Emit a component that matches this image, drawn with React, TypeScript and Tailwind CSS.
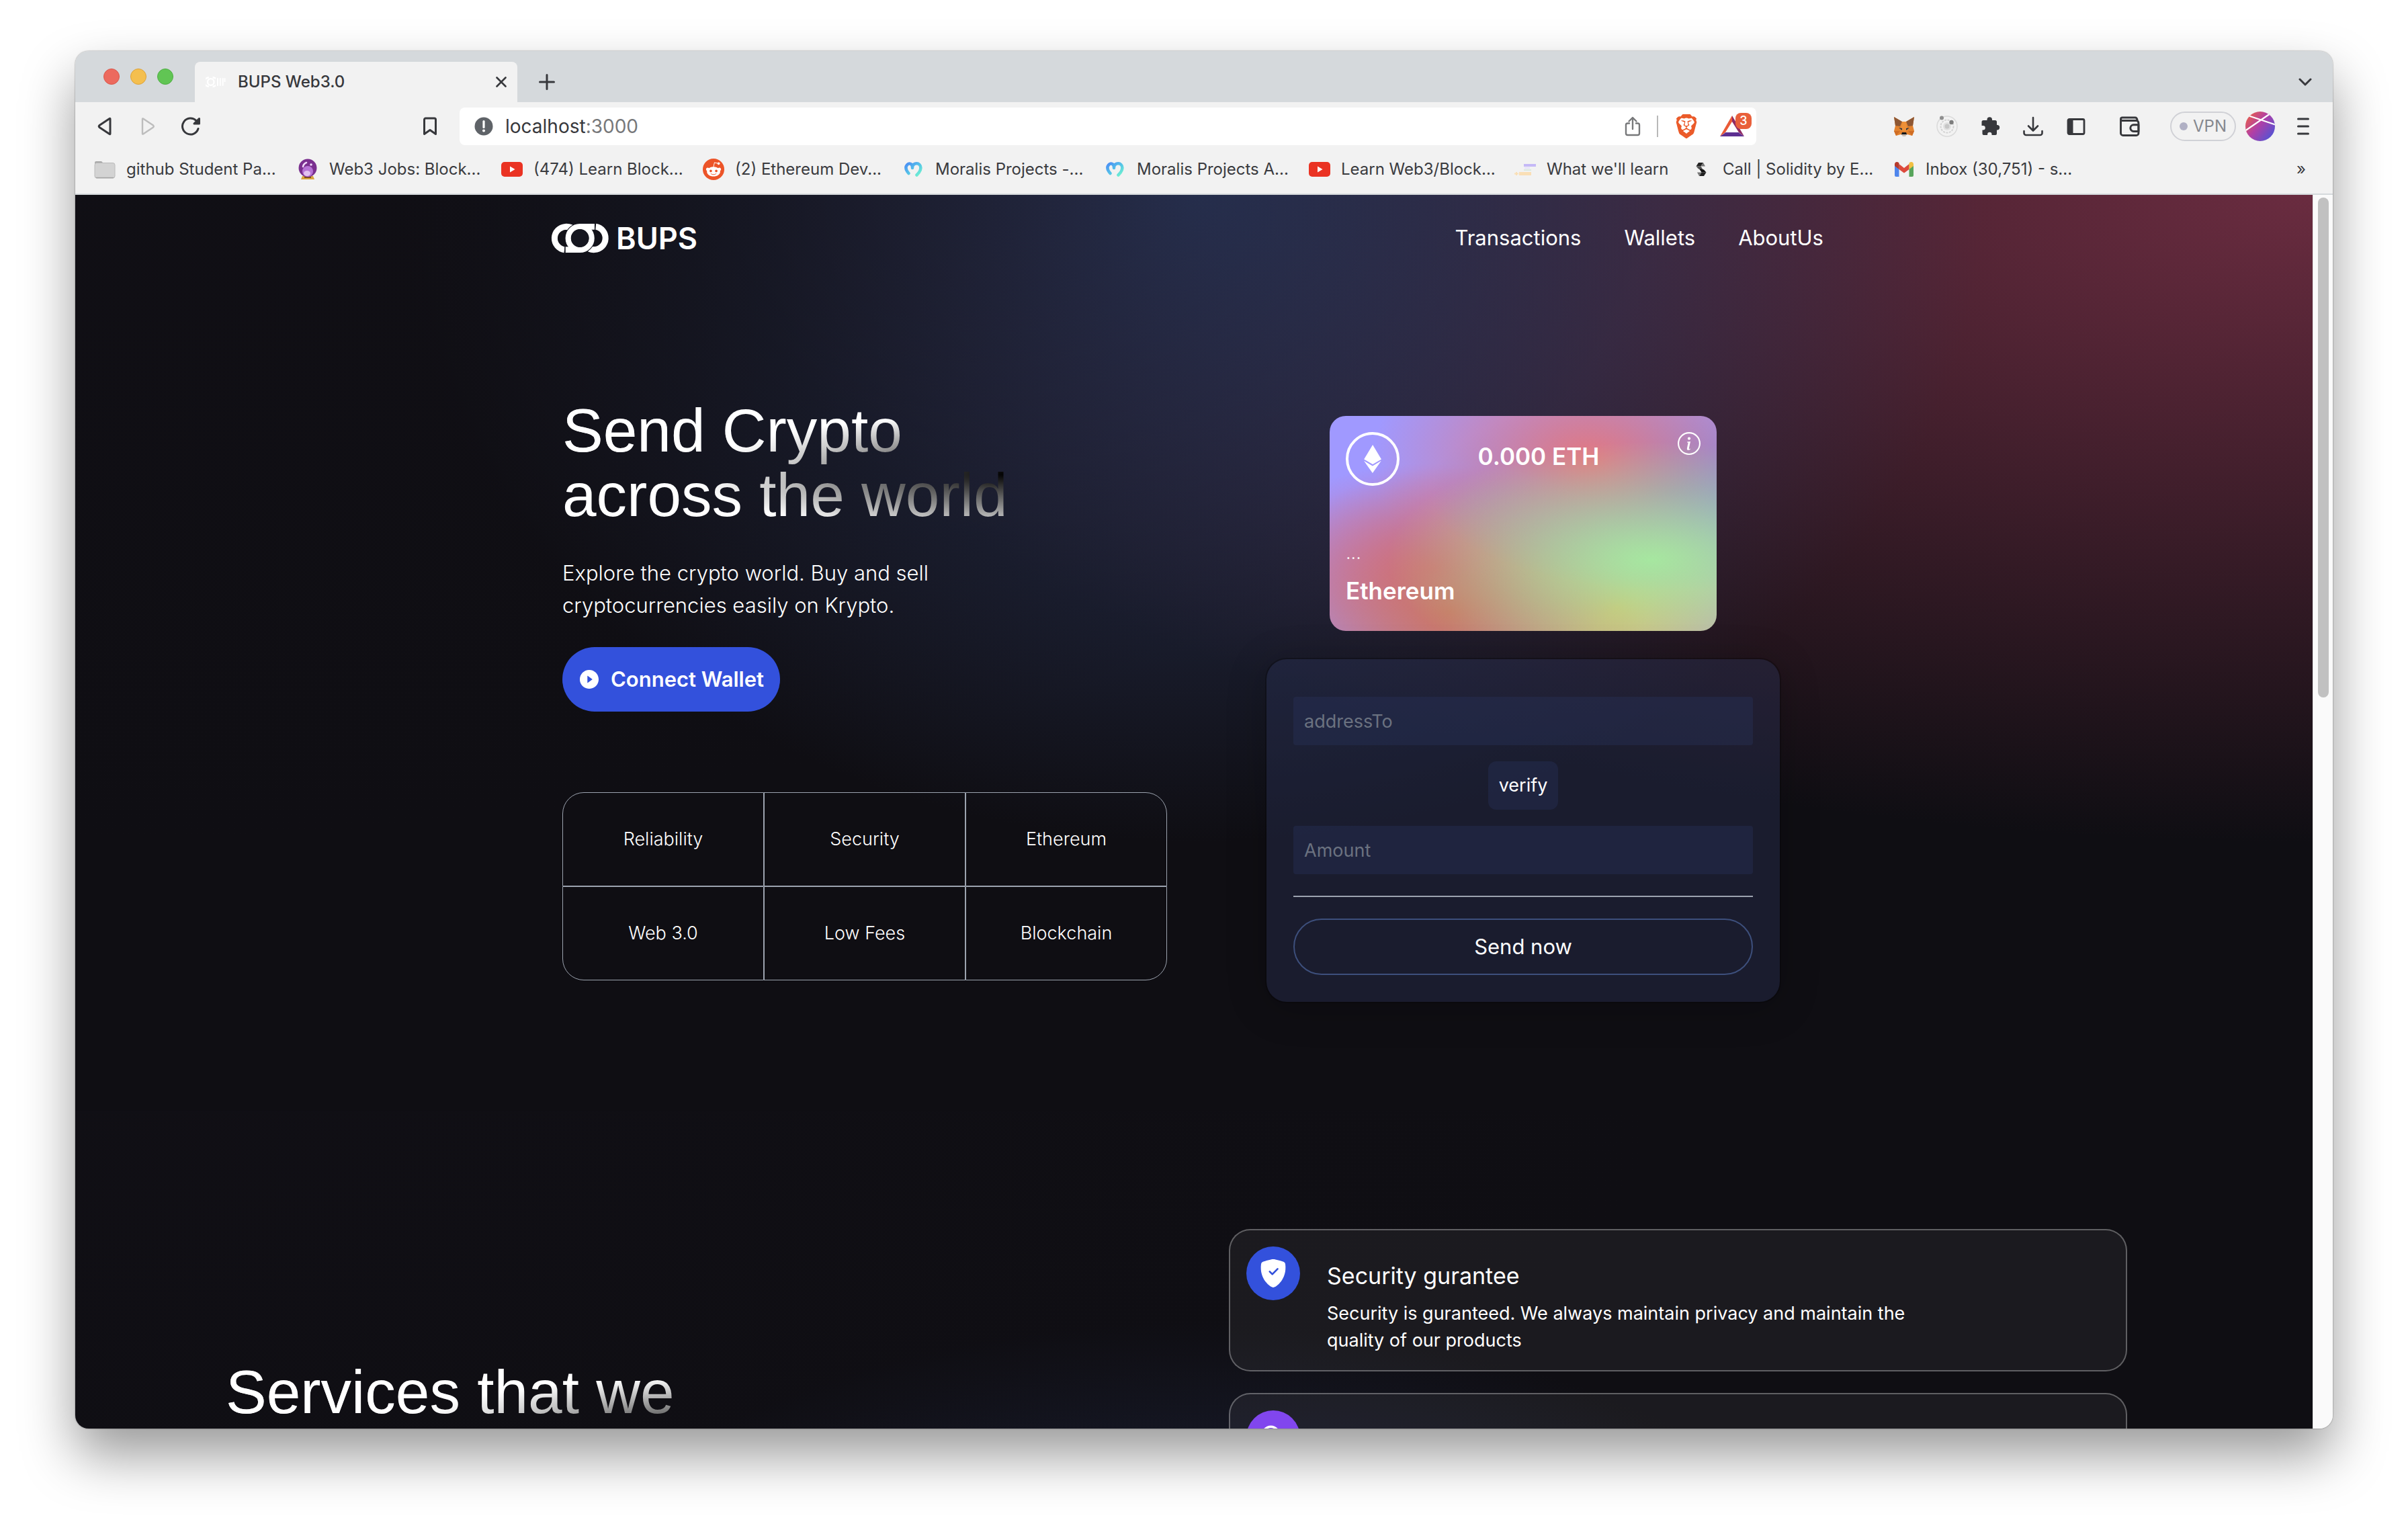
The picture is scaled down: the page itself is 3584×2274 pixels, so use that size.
import type { ReactNode } from "react";
import { SiBrave, SiEthereum } from "react-icons/si";
import { BsInfoCircle, BsShieldFillCheck } from "react-icons/bs";
import { AiFillPlayCircle } from "react-icons/ai";
import { BiSearchAlt } from "react-icons/bi";
import { FaRedditAlien } from "react-icons/fa";

const stroke = {
  fill: "none",
  stroke: "currentColor",
  strokeWidth: 3,
  strokeLinecap: "round" as const,
  strokeLinejoin: "round" as const,
};

function BupsMark({ className }: { className: string }) {
  return (
    <svg viewBox="30 40 260 134" className={className} aria-hidden="true">
      <path d="M90 158.300A51.500 51.500 0 0 1 94 56Q108 55 122 60" fill="none" stroke="currentColor" strokeWidth="27" />
      <path d="M229 55.700A51.500 51.500 0 0 1 224 158Q212 159 200 154" fill="none" stroke="currentColor" strokeWidth="27" />
      <g fill="#15161f" stroke="#15161f" strokeWidth="7">
        <circle cx="159" cy="107" r="64" />
        <path d="M159 43H225V70H200zM159 171H94V144H118z" />
      </g>
      <circle cx="159" cy="107" r="52" fill="none" stroke="currentColor" strokeWidth="25" />
      <path d="M155 43H224V69H198zM163 171H95V145H120z" fill="currentColor" />
      <circle cx="159" cy="107" r="40" fill="#15161f" />
    </svg>
  );
}

function FolderIcon() {
  return (
    <svg viewBox="0 0 32 32" className="size-8" aria-hidden="true">
      <path d="M1 6a2 2 0 0 1 2-2h8l3 3v4H1z" fill="#a9a9a9" />
      <rect x="1" y="6.500" width="30" height="22.500" rx="3" fill="#d3d3d3" stroke="#bababa" />
      <path d="M3 28.500h26" stroke="#a5a5a5" strokeWidth="1.500" />
    </svg>
  );
}

function CrystalBallIcon() {
  return (
    <svg viewBox="0 0 32 32" className="size-8" aria-hidden="true">
      <path d="M8 26h16l2 5H6z" fill="#d9a441" />
      <path d="M11 27h10v2H11z" fill="#7a4f14" />
      <circle cx="16" cy="14" r="13.500" fill="#7a2f8f" />
      <circle cx="16" cy="19" r="8" fill="#b774d6" />
      <ellipse cx="15" cy="22" rx="5" ry="4" fill="#e2c1f2" />
      <path d="M9 12a8 8 0 0 1 5-6" fill="none" stroke="#f0d9fa" strokeWidth="2.500" strokeLinecap="round" />
      <circle cx="21" cy="9" r="1.800" fill="#f0d9fa" />
    </svg>
  );
}

function YoutubeIcon() {
  return (
    <svg viewBox="0 0 32 32" className="size-8" aria-hidden="true">
      <rect x="0" y="5" width="32" height="22" rx="5" fill="#ea3323" />
      <path d="M13 11.500L20.500 16L13 20.500z" fill="#fff" />
    </svg>
  );
}

function RedditIcon() {
  return (
    <span className="flex size-8 items-center justify-center rounded-full bg-[#ec5428] text-white">
      <FaRedditAlien className="size-6" />
    </span>
  );
}

function MoralisIcon() {
  return (
    <svg viewBox="0 0 32 32" className="size-8" aria-hidden="true">
      <defs>
        <linearGradient id="moralis" x1="0" y1="0" x2="1" y2="1">
          <stop offset="0" stopColor="#4a8df5" />
          <stop offset="0.5" stopColor="#55c3e8" />
          <stop offset="1" stopColor="#72f5cf" />
        </linearGradient>
      </defs>
      <path
        d="M8.500 22C5 18 3 13 6 9.500C9 6 14 7.500 14 13C14 7.500 21 5.500 24.500 9C28.500 13 25.500 20 20.500 24.500M14 13V14"
        fill="none"
        stroke="url(#moralis)"
        strokeWidth="4.500"
        strokeLinecap="round"
        strokeLinejoin="round"
      />
    </svg>
  );
}

function NotesIcon() {
  return (
    <svg viewBox="0 0 32 32" className="size-8" aria-hidden="true">
      <rect x="14" y="8" width="18" height="4" fill="#c5b9f7" />
      <rect x="15" y="13" width="8" height="2" fill="#e6e1fb" />
      <rect x="14" y="16" width="11" height="2" fill="#d9e9e0" />
      <rect x="7" y="20" width="18" height="5" fill="#fadfb6" />
      <path d="M0 22.500h6M3 20v5" stroke="#fadfb6" strokeWidth="2" />
    </svg>
  );
}

function SolidityIcon() {
  return (
    <svg viewBox="0 0 32 32" className="size-8" aria-hidden="true">
      <path d="M12 6h7l-3.500 5.500h-7z" fill="#222" />
      <path d="M19 6l3 5.500h-6.500z" fill="#777" />
      <path d="M8.500 11.500h7L19 17l-7-1.500z" fill="#555" />
      <path d="M20 26h-7l3.500-5.500h7z" fill="#222" />
      <path d="M13 26l-3-5.500h6.500z" fill="#777" />
      <path d="M23.500 20.500h-7L13 15l7 1.500z" fill="#111" />
    </svg>
  );
}

function GmailIcon() {
  return (
    <svg viewBox="0 0 32 32" className="size-8" aria-hidden="true">
      <path d="M2 9h6.500v18H4a2 2 0 0 1-2-2z" fill="#4f86ec" />
      <path d="M23.500 9H30v16a2 2 0 0 1-2 2h-4.500z" fill="#58a55c" />
      <path d="M8.500 8L16 14l7.500-6v8L16 21.500L8.500 16z" fill="#dc4a3c" />
      <path d="M2 8.500C2 5 5.500 4 8.500 6.500V16L2 11z" fill="#b63a2c" />
      <path d="M30 8.500C30 5 26.500 4 23.500 6.500V16L30 11z" fill="#f1bf42" />
    </svg>
  );
}

function MetamaskIcon() {
  return (
    <svg viewBox="0 0 32 32" className="size-8" aria-hidden="true">
      <path d="M1 2l12 7h6l12-7-2 13 2 8-3 7-7-2-5 3-5-3-7 2-3-7 2-8z" fill="#e2822f" />
      <path d="M1 2l12 7-3 7-7-1zM31 2L19 9l3 7 7-1z" fill="#8d5734" />
      <path d="M13 9h6l2 14H11z" fill="#ee9038" />
      <path d="M8 18l5 1 0 3zM24 18l-5 1 0 3z" fill="#2a3442" />
      <path d="M1 23l9 0-6 7zM31 23l-9 0 6 7z" fill="#cf6d25" />
      <path d="M12 28l1-2h6l1 2-2 3h-4z" fill="#c9bdb2" />
      <path d="M13 25h6l1 3h-8z" fill="#16181b" />
    </svg>
  );
}

function OrbitIcon() {
  return (
    <svg viewBox="0 0 32 32" className="size-8" fill="none" aria-hidden="true">
      <circle cx="16" cy="16" r="15" stroke="#dadada" strokeWidth="1.500" />
      <circle cx="16" cy="16" r="9.500" stroke="#d2d2d2" strokeWidth="2" strokeDasharray="3 1.500" />
      <circle cx="16" cy="16" r="6" fill="#e0e0e0" />
      <circle cx="16" cy="16" r="3.500" fill="#c6c6c6" />
      <circle cx="8" cy="3.500" r="3" fill="#8f8f8f" />
      <circle cx="22.500" cy="10" r="3.200" fill="#7d7d7d" />
    </svg>
  );
}

function PuzzleIcon() {
  return (
    <svg viewBox="1 0 32 32" className="size-8" fill="currentColor" aria-hidden="true">
      <path d="M12.500 5.500a3.800 3.800 0 0 1 7.500 0V7h4.500A2.500 2.500 0 0 1 27 9.500V14h.5a3.700 3.700 0 0 1 0 7.400H27V27a2 2 0 0 1-2 2h-5.500v-1a3.200 3.200 0 0 0-6.400 0v1H7.500a2 2 0 0 1-2-2v-5.500h1a3.300 3.300 0 0 0 0-6.600h-2V9.500A2.500 2.500 0 0 1 7 7h5.500z" />
    </svg>
  );
}

function DownloadIcon() {
  return (
    <svg viewBox="0 0 32 32" className="size-8" {...stroke} aria-hidden="true">
      <path d="M16 3v19M9 15.500l7 7 7-7M2.500 23v3a3 3 0 0 0 3 3h21a3 3 0 0 0 3-3v-3" strokeWidth="2.600" />
    </svg>
  );
}

function SidebarIcon() {
  return (
    <svg viewBox="0 0 32 32" className="size-8" aria-hidden="true">
      <rect x="4" y="5.500" width="24" height="22" rx="2" {...stroke} strokeWidth="2.800" />
      <rect x="4" y="5.500" width="7.500" height="22" fill="currentColor" />
    </svg>
  );
}

function WalletIcon() {
  return (
    <svg viewBox="0 0 32 32" className="size-9" {...stroke} strokeWidth={2.6} aria-hidden="true">
      <path d="M4 6.500V25a3 3 0 0 0 3 3H24.500a3 3 0 0 0 3-3V11.500a3 3 0 0 0-3-3H6a2 2 0 0 1 0-4H23q2.500 0 3 4" />
      <path d="M27.500 14H21a4.300 4.300 0 0 0 0 8.600h6.500z" />
    </svg>
  );
}

function AvatarIcon() {
  return (
    <svg viewBox="0 0 44 44" className="size-11" aria-hidden="true">
      <defs>
        <linearGradient id="avatar" x1="0" y1="0.100" x2="1" y2="0.900">
          <stop offset="0" stopColor="#ee6242" />
          <stop offset="0.450" stopColor="#b13fa6" />
          <stop offset="1" stopColor="#4556db" />
        </linearGradient>
        <clipPath id="avatar-clip">
          <circle cx="22" cy="22" r="22" />
        </clipPath>
      </defs>
      <g clipPath="url(#avatar-clip)">
        <rect width="44" height="44" fill="url(#avatar)" />
        <path d="M-1 29L37 3M4 6L46 20" stroke="#fff" strokeWidth="2.200" />
      </g>
    </svg>
  );
}

function BatIcon() {
  return (
    <svg viewBox="0 0 36 32" className="h-8 w-9" aria-hidden="true">
      <path d="M18 0L0 31l8-6L18 9z" fill="#ea5a36" />
      <path d="M18 0l18 31-8-6L18 9z" fill="#8f2a63" />
      <path d="M0 31l8.500-6h19L36 31z" fill="#5d2f91" />
    </svg>
  );
}

const bookmarks: { label: string; icon: ReactNode; width: string }[] = [
  { label: "github Student Pa...", icon: <FolderIcon />, width: "w-[302px]" },
  { label: "Web3 Jobs: Block...", icon: <CrystalBallIcon />, width: "w-[304px]" },
  { label: "(474) Learn Block...", icon: <YoutubeIcon />, width: "w-[300px]" },
  { label: "(2) Ethereum Dev...", icon: <RedditIcon />, width: "w-[298px]" },
  { label: "Moralis Projects -...", icon: <MoralisIcon />, width: "w-[300px]" },
  { label: "Moralis Projects A...", icon: <MoralisIcon />, width: "w-[304px]" },
  { label: "Learn Web3/Block...", icon: <YoutubeIcon />, width: "w-[306px]" },
  { label: "What we'll learn", icon: <NotesIcon />, width: "w-[262px]" },
  { label: "Call | Solidity by E...", icon: <SolidityIcon />, width: "w-[302px]" },
  { label: "Inbox (30,751) - s...", icon: <GmailIcon />, width: "w-[302px]" },
];

function TabStrip() {
  return (
    <div className="flex h-[76px] shrink-0 items-end bg-[#d5d9dc]">
      <div className="flex w-[178px] gap-4 self-center pl-[42px]">
        <button aria-label="Close window" className="size-6 rounded-full border border-[#d9584c] bg-[#ec6a5e]" />
        <button aria-label="Minimize window" className="size-6 rounded-full border border-[#dda33a] bg-[#f4bf4f]" />
        <button aria-label="Zoom window" className="size-6 rounded-full border border-[#4fae44] bg-[#61c554]" />
      </div>
      <div className="flex h-15 w-[480px] items-center rounded-t-lg bg-[#f2f2f2] pr-4 pl-4">
        <span className="flex w-[30px] items-center gap-px text-white">
          <svg viewBox="0 0 16 20" className="h-5 w-4" aria-hidden="true">
            <path d="M5 3a7 7 0 0 0 0 14M11 3a7 7 0 0 1 0 14" fill="none" stroke="currentColor" strokeWidth="2.500" />
            <circle cx="8" cy="10" r="5" fill="none" stroke="currentColor" strokeWidth="2.500" />
          </svg>
          <svg viewBox="0 0 14 14" className="h-3.5 w-3.5" aria-hidden="true">
            <path d="M2 1v12M6 1v12M10 1v12M13 1v6" fill="none" stroke="currentColor" strokeWidth="2" />
          </svg>
        </span>
        <span className="ml-[18px] flex-1 text-2xl font-medium text-[#37383c]">BUPS Web3.0</span>
        <button aria-label="Close tab" className="text-[#37383c]">
          <svg viewBox="0 0 16 16" className="size-4" {...stroke} aria-hidden="true">
            <path d="M1.500 1.500l13 13M14.500 1.500l-13 13" strokeWidth="2.600" />
          </svg>
        </button>
      </div>
      <button aria-label="New tab" className="ml-8 flex h-15 items-center text-[#37383c]">
        <svg viewBox="0 0 24 24" className="size-6" {...stroke} aria-hidden="true">
          <path d="M12 1.500v21M1.500 12h21" />
        </svg>
      </button>
      <button aria-label="Search tabs" className="mr-[31px] ml-auto flex h-15 items-center text-[#37383c]">
        <svg viewBox="0 0 20 12" className="h-3 w-5" {...stroke} aria-hidden="true">
          <path d="M2 2l8 8 8-8" />
        </svg>
      </button>
    </div>
  );
}

function Toolbar() {
  return (
    <div className="flex h-[72px] shrink-0 items-center text-[#37383c]">
      <div className="flex w-[516px] items-center pl-3">
        <button aria-label="Back" className="flex w-16 justify-center">
          <svg viewBox="0 0 24 28" className="h-7 w-6" {...stroke} aria-hidden="true">
            <path d="M20 3v22q0 1-1 .5L4 15.500q-1.500-1.500 0-3L19 2.500q1-.5 1 .5z" />
          </svg>
        </button>
        <button aria-label="Forward" className="flex w-16 justify-center text-[#bdbdbd]">
          <svg viewBox="0 0 24 28" className="h-7 w-6" {...stroke} strokeWidth={2.4} aria-hidden="true">
            <path d="M4 3v22q0 1 1 .5L20 15.500q1.500-1.500 0-3L5 2.500q-1-.5-1 .5z" />
          </svg>
        </button>
        <button aria-label="Reload" className="flex w-16 justify-center">
          <svg viewBox="0 0 28 28" className="size-7" {...stroke} aria-hidden="true">
            <path d="M25 17.500A12 12 0 1 1 22 5.500" />
            <path d="M26.500 2.500v7.500h-7.500z" fill="currentColor" />
          </svg>
        </button>
      </div>
      <button aria-label="Bookmark this page">
        <svg viewBox="0 0 24 28" className="h-7 w-6" {...stroke} aria-hidden="true">
          <path d="M3.500 4a2 2 0 0 1 2-2h13a2 2 0 0 1 2 2v21.500L12 19.500 3.500 25.500z" />
        </svg>
      </button>
      <div className="ml-8 flex h-14 w-[1930px] items-center rounded-lg bg-white pl-[22px]">
        <svg viewBox="0 0 28 28" className="size-7" aria-hidden="true">
          <circle cx="14" cy="14" r="13.500" fill="#5f6368" />
          <path d="M14 6.500v9" stroke="#fff" strokeWidth="3.200" strokeLinecap="round" />
          <circle cx="14" cy="20.500" r="2" fill="#fff" />
        </svg>
        <p className="ml-[18px] flex-1 text-[28px] text-[#37383c]">
          localhost<span className="text-[#77787a]">:3000</span>
        </p>
        <button aria-label="Share" className="text-[#77787a]">
          <svg viewBox="0 0 24 30" className="h-[30px] w-6" {...stroke} strokeWidth={2.4} aria-hidden="true">
            <path d="M12 19V2.500M6.500 7.500L12 2l5.500 5.500M7 10.500H4.500A2.500 2.500 0 0 0 2 13v12.500A2.500 2.500 0 0 0 4.500 28h15a2.500 2.500 0 0 0 2.500-2.500V13a2.500 2.500 0 0 0-2.500-2.500H17" />
          </svg>
        </button>
        <span className="mx-6 h-8 w-0.5 bg-[#b9b9b9]" />
        <button aria-label="Brave Shields" className="text-[#eb5b2a]">
          <SiBrave className="size-9" />
        </button>
        <button aria-label="Brave Rewards, 3 notifications" className="relative mr-[18px] ml-8">
          <BatIcon />
          <span className="absolute -top-1 left-[23px] flex size-6 items-center justify-center rounded-lg bg-[#e9603b] text-lg font-medium text-white">
            3
          </span>
        </button>
      </div>
      <div className="ml-auto flex items-center pr-[35px]">
        <button aria-label="MetaMask" className="flex w-16 justify-center">
          <MetamaskIcon />
        </button>
        <button aria-label="Orbit extension" className="flex w-16 justify-center">
          <OrbitIcon />
        </button>
        <button aria-label="Extensions" className="flex w-16 justify-center">
          <PuzzleIcon />
        </button>
        <button aria-label="Downloads" className="flex w-16 justify-center">
          <DownloadIcon />
        </button>
        <button aria-label="Sidebar" className="flex w-16 justify-center">
          <SidebarIcon />
        </button>
        <button aria-label="Wallet" className="mx-4 flex w-16 justify-center">
          <WalletIcon />
        </button>
        <button className="mr-3.5 ml-3 flex h-11 w-[98px] items-center justify-center gap-2 rounded-full border-2 border-[#d0d1d6] text-2xl text-[#85888f]">
          <span className="size-3 rounded-full bg-[#b0b0c4]" />
          VPN
        </button>
        <button aria-label="Profile">
          <AvatarIcon />
        </button>
        <button aria-label="Menu" className="ml-[33px]">
          <svg viewBox="0 0 18 26" className="h-[26px] w-[18px]" {...stroke} aria-hidden="true">
            <path d="M1.500 2h15M1.500 13h15M1.500 24h15" />
          </svg>
        </button>
      </div>
    </div>
  );
}

function BookmarksBar() {
  return (
    <nav aria-label="Bookmarks" className="flex h-[66px] shrink-0 border-b-2 border-[#d5d9dc] pl-7 text-2xl text-[#3a3b3f]">
      {bookmarks.map((bookmark) => (
        <a key={bookmark.label} href="#" className={`flex h-14 shrink-0 items-center gap-4 whitespace-nowrap ${bookmark.width}`}>
          {bookmark.icon}
          {bookmark.label}
        </a>
      ))}
      <button aria-label="More bookmarks" className="mr-10 ml-auto h-14">
        »
      </button>
    </nav>
  );
}

function EthCard() {
  return (
    <div className="flex h-80 w-[576px] flex-col justify-between rounded-3xl bg-[#a099ff] bg-[radial-gradient(at_83%_67%,rgb(166,231,160)_0,transparent_58%),radial-gradient(at_67%_20%,rgb(228,120,128)_0,transparent_59%),radial-gradient(at_88%_35%,hsla(222,81%,65%,1)_0,transparent_50%),radial-gradient(at_31%_91%,rgb(202,118,100)_0,transparent_52%),radial-gradient(at_27%_71%,rgb(218,100,140)_0,transparent_49%),radial-gradient(at_74%_89%,rgb(236,180,90)_0,transparent_51%),radial-gradient(at_53%_75%,hsla(174,94%,68%,1)_0,transparent_45%)] px-6 pt-6 pb-8 text-white">
      <div className="flex items-start justify-between">
        <span className="flex size-20 items-center justify-center rounded-full border-4 border-white">
          <SiEthereum className="size-[42px]" />
        </span>
        <p className="mt-4 text-[35px] leading-10 font-semibold">0.000 ETH</p>
        <BsInfoCircle className="size-[34px]" />
      </div>
      <div>
        <p className="text-[27px] leading-10 font-light">...</p>
        <p className="mt-2 text-[35px] leading-[56px] font-semibold">Ethereum</p>
      </div>
    </div>
  );
}

function SendForm() {
  return (
    <form
      onSubmit={(event) => event.preventDefault()}
      className="flex w-[768px] flex-col items-center rounded-[32px] border-2 border-black/30 bg-[#2a3158]/40 bg-clip-padding px-10 pt-14 pb-10 text-white shadow-[0_8px_60px_rgba(0,0,0,0.2)]"
    >
      <input
        aria-label="addressTo"
        placeholder="addressTo"
        className="h-[72px] w-full rounded-sm bg-[#273359]/40 px-4 text-[27px] outline-none placeholder:text-[#6b7280]"
      />
      <button type="button" className="my-6 h-[72px] rounded-xl bg-[#273359]/40 px-4 text-[27px]">
        verify
      </button>
      <input
        aria-label="Amount"
        placeholder="Amount"
        type="number"
        className="h-[72px] w-full rounded-sm bg-[#273359]/40 px-4 text-[27px] outline-none placeholder:text-[#6b7280]"
      />
      <div className="my-8 h-0.5 w-full bg-[#9ca3af]" />
      <button type="submit" className="h-[84px] w-full rounded-full border-2 border-[#3d4f7c] text-[31px]">
        Send now
      </button>
    </form>
  );
}

const features = ["Reliability", "Security", "Ethereum", "Web 3.0", "Low Fees", "Blockchain"];
const corners = ["rounded-tl-[32px]", "", "rounded-tr-[32px]", "rounded-bl-[32px]", "", "rounded-br-[32px]"];

function Welcome() {
  return (
    <div className="shrink-0 bg-[radial-gradient(at_0%_0%,hsla(253,16%,7%,1)_0,transparent_50%),radial-gradient(at_50%_0%,rgb(46,58,98)_0,transparent_50%),radial-gradient(at_100%_0%,rgb(106,44,64)_0,transparent_50%)]">
      <nav className="mx-auto flex h-[129px] max-w-[1914px] items-center justify-between pr-5 text-white">
        <a href="#" className="flex items-center gap-2.5">
          <BupsMark className="h-[45px] w-[87px]" />
          <span className="text-[45px] leading-none font-semibold">BUPS</span>
        </a>
        <ul className="flex gap-16 text-[31px]">
          <li><a href="#">Transactions</a></li>
          <li><a href="#">Wallets</a></li>
          <li><a href="#">AboutUs</a></li>
        </ul>
      </nav>
      <div className="mx-auto grid max-w-[1880px] grid-cols-2 gap-20 py-40">
        <div className="flex flex-col items-start pt-0.5">
          <h1 className="bg-white bg-[radial-gradient(at_4%_36%,#fff_0,transparent_53%),radial-gradient(at_100%_60%,#000_0,transparent_50%)] bg-clip-text pt-3 pb-1 font-['Liberation_Sans',sans-serif] text-[91px] leading-[96px] text-transparent">
            Send Crypto
            <br />
            across the world
          </h1>
          <p className="mt-10 text-[31px] leading-[48px] font-light text-white">
            Explore the crypto world. Buy and sell
            <br />
            cryptocurrencies easily on Krypto.
          </p>
          <button className="mt-[38px] flex h-24 items-center gap-4 rounded-full bg-[#3351dc] px-6 text-[31px] font-semibold text-white">
            <AiFillPlayCircle className="size-8" />
            Connect Wallet
          </button>
          <ul className="mt-30 grid w-full grid-cols-3 text-[27px] font-light text-white">
            {features.map((feature, i) => (
              <li key={feature} className={`flex h-[140px] items-center justify-center border border-[#9ca3af] ${corners[i]}`}>
                {feature}
              </li>
            ))}
          </ul>
        </div>
        <div className="flex flex-col items-center gap-10 pt-10">
          <EthCard />
          <SendForm />
        </div>
      </div>
    </div>
  );
}

function Services() {
  return (
    <div className="grid min-h-[1068px] shrink-0 grid-cols-2 items-start gap-39 bg-[radial-gradient(at_0%_0%,hsla(253,16%,7%,1)_0,transparent_50%),radial-gradient(at_50%_100%,hsla(225,39%,25%,1)_0,transparent_50%)] pt-44 pr-69 pl-56 text-white">
      <div className="pt-[183px]">
        <h2 className="h-52 w-[780px] bg-white bg-[radial-gradient(at_4%_36%,#fff_0,transparent_53%),radial-gradient(at_100%_60%,#000_0,transparent_50%)] bg-clip-text pt-3 pb-1 font-['Liberation_Sans',sans-serif] text-[91px] leading-[96px] text-transparent">
          Services that we
        </h2>
      </div>
      <div className="flex flex-col gap-8">
        <article className="flex h-[212px] items-start gap-10 rounded-[32px] border-2 border-white/30 bg-white/5 p-6">
          <span className="flex size-20 shrink-0 items-center justify-center rounded-full bg-[#3351dc]">
            <BsShieldFillCheck className="size-[42px]" />
          </span>
          <div className="pt-4">
            <h3 className="text-[34px] leading-[56px]">Security gurantee</h3>
            <p className="mt-2 text-[27px] leading-10">
              Security is guranteed. We always maintain privacy and maintain the
              <br />
              quality of our products
            </p>
          </div>
        </article>
        <article aria-label="Search" className="h-[212px] rounded-[32px] border-2 border-white/30 bg-white/5 p-6">
          <span className="flex size-20 items-center justify-center rounded-full bg-[#8146ee]">
            <BiSearchAlt className="size-[42px]" />
          </span>
        </article>
      </div>
    </div>
  );
}

export default function App() {
  return (
    <div className="flex h-screen flex-col bg-white px-28 pt-19 pb-37 font-['Inter',sans-serif]">
      <div className="flex min-h-0 flex-1 flex-col overflow-hidden rounded-[20px] bg-[#f2f2f2] shadow-[0_0_2px_rgba(0,0,0,0.5),0_40px_80px_rgba(0,0,0,0.4)]">
        <TabStrip />
        <Toolbar />
        <BookmarksBar />
        <div className="flex min-h-0 flex-1">
          <main className="flex flex-1 flex-col overflow-hidden bg-[#0f0e13]">
            <Welcome />
            <Services />
          </main>
          <div className="w-[30px] shrink-0 border-l border-[#e4e4e4] bg-[#fafafa] pt-1 pl-[7px]">
            <div className="h-[744px] w-4 rounded-full bg-[#c1c1c1]" />
          </div>
        </div>
      </div>
    </div>
  );
}
